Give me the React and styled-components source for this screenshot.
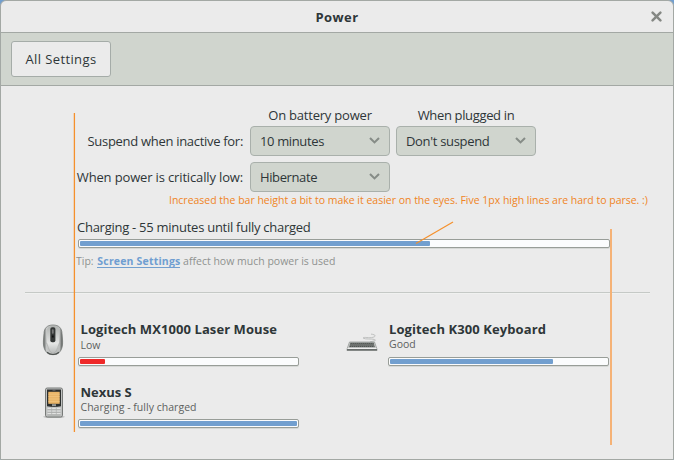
import React from 'react';
import styled, { createGlobalStyle } from 'styled-components';

const Global = createGlobalStyle`
  * { box-sizing: border-box; }
  html, body { margin: 0; height: 100%; overflow: hidden; background: #729fcf; }
`;

const ink = '#2e3638';
const line = '#a3a8a4';
const accent = '#f08424';

const Window = styled.div`
  position: relative;
  display: flex;
  flex-direction: column;
  width: 674px;
  height: 460px;
  border: 1px solid ${line};
  border-radius: 6px 6px 0 0;
  background: #ebebeb;
  color: ${ink};
  font: 13px/18px "Open Sans", "Noto Sans", sans-serif;
  white-space: nowrap;
  overflow: hidden;
`;

const Text = styled.span`
  letter-spacing: ${(p) => p.$track || 0}px;
`;

const TitleBar = styled.header`
  display: grid;
  grid-template-columns: 1fr auto 1fr;
  align-items: center;
  flex: none;
  height: 32px;
  padding: 0 11px;
  border-bottom: 1px solid ${line};
`;

const Title = styled.h1`
  grid-column: 2;
  margin: 0;
  font-size: 13px;
  line-height: 18px;
  font-weight: 700;
  letter-spacing: 0.4px;
`;

const CloseButton = styled.button`
  justify-self: end;
  display: flex;
  width: 11px;
  height: 11px;
  padding: 0;
  border: 0;
  background: none;
`;

const Toolbar = styled.nav`
  flex: none;
  display: flex;
  align-items: center;
  height: 53px;
  padding: 0 10px;
  border-bottom: 1px solid ${line};
  background: #d0d5ce;
`;

const Button = styled.button`
  width: 100px;
  height: 36px;
  padding: 0;
  border: 1px solid #a5aca8;
  border-radius: 3px;
  background: #ebebeb;
  color: inherit;
  font: inherit;
`;

const Content = styled.main`
  display: flex;
  flex-direction: column;
  padding: 20px 23px 0 24px;
`;

const Settings = styled.section`
  display: grid;
  grid-template-columns: 167px 140px 140px;
  grid-template-rows: 14px 30px 30px;
  gap: 6px;
  align-items: center;
  margin-left: 52px;
`;

const ColumnTitle = styled.div`
  grid-column: ${(p) => p.$column};
  align-self: end;
  text-align: center;
  margin-bottom: -4px;
`;

const FieldLabel = styled.label`
  grid-column: 1;
  justify-self: end;
  padding-right: 1px;
`;

const Select = styled.button`
  display: flex;
  align-items: center;
  justify-content: space-between;
  height: 30px;
  padding: 0 9px;
  border: 1px solid #a9b0ab;
  border-radius: 4px;
  background: #d0d5ce;
  color: inherit;
  font: inherit;
`;

const Battery = styled.section`
  display: flex;
  flex-direction: column;
  margin: 26px 0 0 51px;
`;

const BatteryStatus = styled.div`
  padding-left: 1px;
  letter-spacing: -0.265px;
`;

const Bar = styled.div`
  width: ${(p) => p.$width}px;
  height: 9px;
  padding: 1px;
  border: 1px solid #989d98;
  border-radius: 2px;
  background: #fbfcfd;
  box-shadow: 0 1px 0 #d6d8d6;
`;

const Fill = styled.div`
  width: ${(p) => p.$width}px;
  height: 5px;
  border-radius: 1px;
  background: ${(p) => (p.$low ? '#ef2929' : '#729fcf')};
`;

const BatteryBar = styled.div`
  margin: 3px 0 0 2px;
`;

const Tip = styled.p`
  margin: 5px 0 0;
  color: #8f9290;
  font-size: 10.5px;
  line-height: 16px;
`;

const Link = styled.a`
  display: inline-block;
  height: 14px;
  margin-left: 1px;
  border-bottom: 1px solid #729fcf;
  color: #6f9ed1;
  font-weight: 700;
  line-height: 14px;
  letter-spacing: 0.18px;
`;

const Divider = styled.hr`
  width: 625px;
  height: 2px;
  margin: 23px 0 0;
  border: 0;
  border-top: 1px solid #c5c9c6;
  background: #f0f1f0;
`;

const Devices = styled.section`
  display: grid;
  grid-template-columns: 310px 1fr;
  grid-template-rows: 62px 62px;
  margin-top: 27px;
`;

const Device = styled.article`
  display: grid;
  grid-template-columns: 53px 1fr;
  align-items: start;
`;

const DeviceIcon = styled.div`
  display: flex;
  padding: ${(p) => p.$top}px 0 0 ${(p) => p.$left}px;
`;

const DeviceInfo = styled.div`
  display: grid;
  grid-template-rows: ${(p) => p.$head}px ${(p) => 36 - p.$head}px 9px;
`;

const DeviceName = styled.h2`
  margin: ${(p) => p.$top}px 0 0 ${(p) => p.$indent}px;
  font-size: 13px;
  line-height: 14px;
  font-weight: 700;
`;

const DeviceState = styled.div`
  margin-left: ${(p) => p.$indent}px;
  color: #5d6160;
  font-size: 10.5px;
  line-height: 16px;
`;

const Note = styled.div`
  position: absolute;
  left: 168px;
  top: 191px;
  color: ${accent};
  font-size: 10.5px;
  line-height: 16px;
  letter-spacing: -0.01px;
`;

const Marks = styled.svg`
  position: absolute;
  left: -1px;
  top: -1px;
  pointer-events: none;
`;

const Chevron = () => (
  <svg width="11" height="8" viewBox="0 0 11 8">
    <path d="M1 1 5.500 5.400 10 1" fill="none" stroke="#868c87" strokeWidth="2.100" />
  </svg>
);

const MouseIcon = () => (
  <svg width="22" height="32" viewBox="0 0 22 32">
    <defs>
      <linearGradient id="mouse-side" x1="0" x2="1">
        <stop offset="0" stopColor="#555957" />
        <stop offset=".16" stopColor="#c5c7c6" />
        <stop offset=".84" stopColor="#b9bbba" />
        <stop offset="1" stopColor="#4c504e" />
      </linearGradient>
      <linearGradient id="mouse-top" x1="0" y1="0" x2="0" y2="1">
        <stop offset="0" stopColor="#b0b3b1" />
        <stop offset=".65" stopColor="#e4e5e4" />
        <stop offset="1" stopColor="#b9bbba" />
      </linearGradient>
    </defs>
    <path d="M11 1C5 1 2.200 4.200 2 9.500L1.400 17C1 25.500 4.400 30.700 11 30.700S21 25.500 20.600 17L20 9.500C19.800 4.200 17 1 11 1Z" fill="url(#mouse-side)" stroke="#777b79" strokeWidth=".8" />
    <path d="M11 2C6.500 2 4.600 4.600 4.600 9L5 18c.2 7 2.200 10.800 6 10.800S16.800 25 17 18L17.400 9C17.400 4.600 15.500 2 11 2Z" fill="url(#mouse-top)" />
    <path d="M4 18.500C6 19.500 6 28 11 29.500C16 28 16 19.500 18 18.500" fill="none" stroke="#a2a5a3" strokeWidth=".6" />
    <path d="M5 28.300C8 31.200 14 31.200 17 28.300" fill="none" stroke="#4e5250" strokeWidth="1.200" />
    <rect x="8.300" y="3.300" width="5.100" height="15" rx="1.800" fill="#343736" />
    <rect x="9.900" y="5.300" width="1.800" height="4.500" rx=".8" fill="#777" />
    <rect x="9.900" y="11.500" width="1.800" height="2" fill="#111" />
  </svg>
);

const PhoneIcon = () => (
  <svg width="24" height="32" viewBox="0 0 24 32">
    <ellipse cx="12" cy="29.800" rx="11" ry="1.300" fill="#8c8e8d" opacity=".55" />
    <rect x="3.500" y="1" width="17" height="29" rx="1.800" fill="#bfc1c0" stroke="#777a78" />
    <path d="M5 2.500h14v16.800q-7 1.400-14 0Z" fill="#2c2f2e" />
    <rect x="6.300" y="4.800" width="11.400" height="12" fill="#eab568" />
    <path d="M6.300 7.200h11.400M6.300 9.600h11.400M6.300 12h11.400M6.300 14.400h11.400" stroke="#f3c884" strokeWidth=".7" />
    <path d="M10.500 3.100h3" stroke="#888" strokeWidth=".8" />
    <rect x="10" y="17.200" width="4" height="2" fill="#9a9d9b" />
    <path d="M5.500 21.600h13M5.500 24.100h13M5.500 26.600h13" stroke="#e2e3e2" strokeWidth="1.500" strokeDasharray="3.600 1.100" />
    <path d="M5.500 22.800h13M5.500 25.300h13M5.500 27.900h13" stroke="#989b99" strokeWidth=".6" />
  </svg>
);

const KeyboardIcon = () => (
  <svg width="32" height="19" viewBox="0 0 32 19">
    <path d="M17 5C18 3.600 23 5.400 27 4.300S29 1.500 25 1.100M17 5C19 6.800 26 5.400 28.500 6.500S28 8 24 8.800" fill="none" stroke="#b9bbba" strokeWidth=".9" />
    <path d="M3.500 9h25L31 16.200H1Z" fill="#cfd1d0" stroke="#969997" strokeWidth=".8" />
    <path d="M4.300 9.500h23.400l1.300 4.700H3Z" fill="#7b7f7c" />
    <path d="M4.600 10.500h23M4.300 12h24M3.800 13.500h24.500" stroke="#4c504e" strokeWidth=".9" strokeDasharray="1.300 .7" />
    <path d="M.8 16.200h30.400v1.500H.8Z" fill="#565c59" />
    <path d="M1.500 15.500h29" stroke="#f0f0f0" strokeWidth="1" />
  </svg>
);

function DeviceRow({ icon, iconTop, iconLeft, indent, nameTop, name, track, state, stateTrack, head, fill, low }) {
  return (
    <Device>
      <DeviceIcon $top={iconTop} $left={iconLeft}>{icon}</DeviceIcon>
      <DeviceInfo $head={head}>
        <DeviceName $top={nameTop} $indent={indent}><Text $track={track}>{name}</Text></DeviceName>
        <DeviceState $indent={indent}><Text $track={stateTrack}>{state}</Text></DeviceState>
        <Bar $width={221}><Fill $width={fill} $low={low} /></Bar>
      </DeviceInfo>
    </Device>
  );
}

export default function App() {
  return (
    <>
      <Global />
      <Window>
        <TitleBar>
          <Title>Power</Title>
          <CloseButton aria-label="Close">
            <svg width="11" height="11" viewBox="0 0 11 11">
              <path d="M1.600 1.600 9.400 9.400M9.400 1.600 1.600 9.400" stroke="#858884" strokeWidth="2.500" strokeLinecap="round" />
            </svg>
          </CloseButton>
        </TitleBar>
        <Toolbar>
          <Button><Text $track={0.386}>All Settings</Text></Button>
        </Toolbar>
        <Content>
          <Settings>
            <ColumnTitle $column={2}><Text $track={-0.21}>On battery power</Text></ColumnTitle>
            <ColumnTitle $column={3}><Text $track={-0.35}>When plugged in</Text></ColumnTitle>
            <FieldLabel><Text $track={-0.3}>Suspend when inactive for:</Text></FieldLabel>
            <Select><Text $track={-0.36}>10 minutes</Text><Chevron /></Select>
            <Select><Text $track={-0.318}>Don't suspend</Text><Chevron /></Select>
            <FieldLabel><Text $track={-0.15}>When power is critically low:</Text></FieldLabel>
            <Select><Text $track={-0.39}>Hibernate</Text><Chevron /></Select>
          </Settings>
          <Battery>
            <BatteryStatus>Charging - 55 minutes until fully charged</BatteryStatus>
            <BatteryBar><Bar $width={532}><Fill $width={350} /></Bar></BatteryBar>
            <Tip>Tip: <Link>Screen Settings</Link> affect how much power is used</Tip>
          </Battery>
          <Divider />
          <Devices>
            <DeviceRow icon={<MouseIcon />} iconTop={3} iconLeft={17} indent={2.5} nameTop={1} name="Logitech MX1000 Laser Mouse" track={0.082} state="Low" head={16} fill={25} low />
            <DeviceRow icon={<KeyboardIcon />} iconTop={12} iconLeft={11} indent={1} nameTop={1} name="Logitech K300 Keyboard" track={0.095} state="Good" head={15} fill={163} />
            <DeviceRow icon={<PhoneIcon />} iconTop={4} iconLeft={17} indent={2.5} nameTop={2} name="Nexus S" track={-0.04} state="Charging - fully charged" stateTrack={0.026} head={16} fill={217} />
          </Devices>
        </Content>
        <Note>Increased the bar height a bit to make it easier on the eyes. Five 1px high lines are hard to parse. :)</Note>
        <Marks width="674" height="460" viewBox="0 0 674 460">
          <path d="M74.400 113V432" stroke="#f5902c" strokeWidth="1.300" />
          <path d="M611 229V445" stroke="#f5b276" strokeWidth="2" />
          <path d="M416 243.500 453 222" stroke="#f5902c" strokeWidth="1.200" />
        </Marks>
      </Window>
    </>
  );
}
